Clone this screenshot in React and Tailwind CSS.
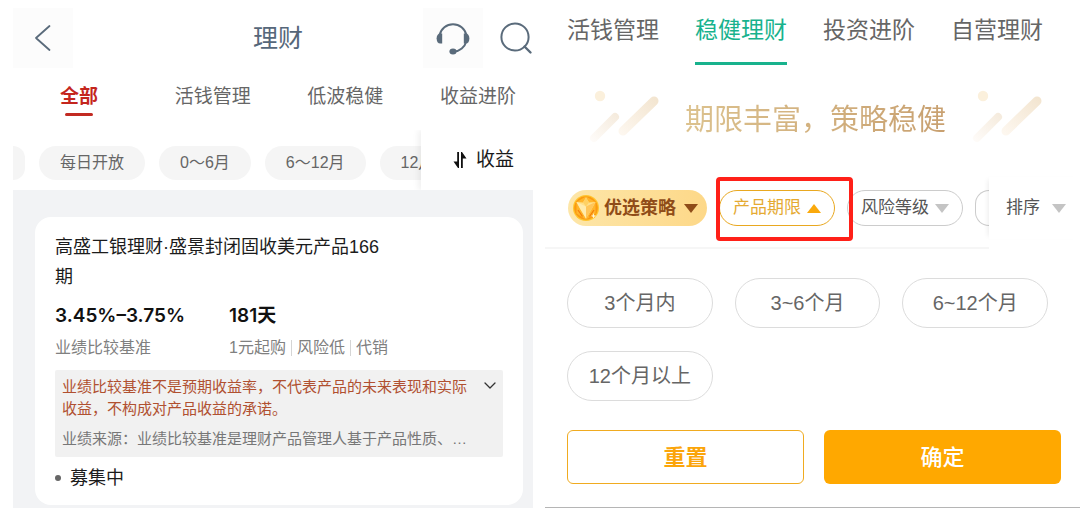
import React from "react";

const sans = "font-['Liberation_Sans','Noto_Sans_CJK_SC',sans-serif]";

function BackIcon() {
  return (
    <svg className="size-[30px]" viewBox="0 0 30 30" fill="none" stroke="#5a6b7b" strokeWidth="1.8" strokeLinecap="round" strokeLinejoin="round" aria-hidden="true">
      <path d="M21.500 3L8 15L21.500 27" />
    </svg>
  );
}

function HeadsetIcon() {
  return (
    <svg className="size-[34px]" viewBox="0 0 34 34" fill="none" aria-hidden="true">
      <path d="M3.600 14A13.700 13.700 0 0 1 30.400 14" stroke="#5a6b7b" strokeWidth="2" />
      <path d="M30.300 20.500A13.700 13.700 0 0 1 18 30.600" stroke="#5a6b7b" strokeWidth="2" />
      <path d="M6.200 12.500H4.200C2 12.500 .6 14.500 .6 17.500S2 22.500 4.200 22.500H6.200Z" fill="#5a6b7b" />
      <path d="M27.800 12.500H29.800C32 12.500 33.400 14.500 33.400 17.500S32 22.500 29.800 22.500H27.800Z" fill="#5a6b7b" />
      <ellipse cx="17" cy="30.500" rx="3.600" ry="3" fill="#5a6b7b" />
    </svg>
  );
}

function SearchIcon() {
  return (
    <svg className="size-[34px]" viewBox="0 0 34 34" fill="none" stroke="#5a6b7b" strokeWidth="2" strokeLinecap="round" aria-hidden="true">
      <circle cx="16" cy="16" r="13.600" />
      <path d="M25.500 25.500L31.500 31.500" strokeWidth="2.400" />
    </svg>
  );
}

function SortIcon() {
  return (
    <svg className="h-[18px] w-[14px]" viewBox="0 0 14 18" aria-hidden="true">
      <path d="M4.200 1H6V17H5L.5 10.500H4.200Z" fill="#111" />
      <path d="M8 1H9L13.500 7.500H9.800V17H8Z" fill="#111" />
    </svg>
  );
}

function Triangle({ up = false, className }) {
  return (
    <svg className={className} viewBox="0 0 14 9" fill="currentColor" aria-hidden="true">
      <path d={up ? "M7 0L14 9H0Z" : "M0 0H14L7 9Z"} />
    </svg>
  );
}

function CoinIcon() {
  return (
    <svg className="size-[26px]" viewBox="0 0 26 26" aria-hidden="true">
      <circle cx="13" cy="13" r="13" fill="#ffc52e" />
      <circle cx="13" cy="13" r="11.800" fill="#fb9a12" />
      <path d="M13 1.500L22.500 7V18.500L13 24.500L3.500 18.500V7Z" fill="#ffb52b" />
      <path d="M3.500 7L10 7.500L13 2.500L16 7.500L22.500 7L19 13.500L13 23.500L7 13.500Z" fill="#ffe08a" />
      <path d="M13 11.500L22.500 7L19 13.500L13 23.500Z" fill="#ffc65a" />
      <path d="M3.500 7L13 11.500V23.500L7 13.500Z" fill="#ffebac" />
      <path d="M10 7.500L13 2.500L16 7.500L13 11.500Z" fill="#ffd163" />
      <path d="M5 15L9.500 21.500M21 15L16.500 21.500" stroke="#f47d0b" strokeWidth="1.300" />
      <path d="M20.500 18L21.200 20.200L23 21L21.200 21.700L20.500 23.500L19.800 21.700L18 21L19.800 20.200Z" fill="#fff6d8" />
    </svg>
  );
}

function Sparks({ id }) {
  return (
    <svg className="h-[56px] w-[72px]" viewBox="0 0 72 56" fill="none" strokeLinecap="round" aria-hidden="true">
      <defs>
        <linearGradient id={id} gradientUnits="userSpaceOnUse" x1="68" y1="10" x2="34" y2="46">
          <stop stopColor="#f3e5d0" />
          <stop offset="1" stopColor="#fdf7ef" />
        </linearGradient>
        <linearGradient id={id + "-short"} gradientUnits="userSpaceOnUse" x1="29" y1="26" x2="4" y2="52">
          <stop stopColor="#f5ebdd" />
          <stop offset="1" stopColor="#fefbf8" />
        </linearGradient>
      </defs>
      <circle cx="12" cy="8" r="5.200" fill="#fbf0dc" />
      <path d="M66 13L35 43" stroke={`url(#${id})`} strokeWidth="9" />
      <path d="M27 29L6 50" stroke={`url(#${id}-short)`} strokeWidth="8" />
    </svg>
  );
}

function WealthPanel() {
  const chip = "h-[34px] shrink-0 rounded-full bg-[#f5f5f5] px-[21px] text-base text-[#666] whitespace-nowrap";
  return (
    <section className="flex min-w-0 flex-col">
      <header className="flex items-center pt-2">
        <button aria-label="返回" className="flex size-[60px] items-center justify-center bg-[#fcfcfc]">
          <BackIcon />
        </button>
        <h1 className="flex-1 pl-[60px] text-center text-[25px] leading-[60px] text-[#56677a]">理财</h1>
        <div className="flex items-center gap-4">
          <button aria-label="客服" className="flex size-[60px] items-center justify-center bg-[#fcfcfc]">
            <HeadsetIcon />
          </button>
          <button aria-label="搜索">
            <SearchIcon />
          </button>
        </div>
      </header>

      <nav className="flex justify-between pt-[15px] pr-[17px] pl-[47px] text-[19px] leading-7 text-[#666]">
        <a href="#all" aria-current="page" className="flex flex-col items-center font-bold text-[#c4261d]">
          全部
          <span className="mt-[2px] h-[3px] w-7 rounded-full bg-[#c22a22]" />
        </a>
        <a href="#cash" className="pl-[38px]">活钱管理</a>
        <a href="#low" className="pl-[18px]">低波稳健</a>
        <a href="#growth" className="pl-[18px]">收益进阶</a>
      </nav>

      <div className="relative mt-[14px] flex h-[60px] items-center gap-[14px] overflow-hidden pt-[6px]">
        <span className="h-[34px] w-3 shrink-0 rounded-r-full bg-[#f5f5f5]" />
        <button className={chip}>每日开放</button>
        <button className={chip}>0～6月</button>
        <button className={chip}>6～12月</button>
        <button className={chip}>12月以上</button>
        <button className="absolute inset-y-0 right-0 flex w-[112px] items-center gap-[9px] bg-white pl-8 text-[19px] text-[#1a1a1a] shadow-[-3px_0_6px_rgba(0,0,0,0.06)]">
          <SortIcon />
          收益
        </button>
      </div>

      <div className="flex-1 bg-[#f2f3f5] pt-[27px] pr-[10px] pl-[22px]">
        <article className="rounded-2xl bg-white px-5 pt-[15px] pb-3">
          <h2 className="w-3/4 text-lg leading-[30px] text-[#1c1c1c]">高盛工银理财·盛景封闭固收美元产品166期</h2>
          <div className="grid grid-cols-[174px_1fr] pt-2">
            <strong className="font-['Inter','Noto_Sans_CJK_SC',sans-serif] text-[19px] leading-8 font-semibold text-[#111]">3.45%–3.75%</strong>
            <strong className="font-['Inter','Noto_Sans_CJK_SC',sans-serif] text-[19px] leading-8 font-semibold text-[#111]">181天</strong>
            <span className="text-base leading-8 text-[#808080]">业绩比较基准</span>
            <span className="flex items-center text-base leading-8 text-[#808080]">
              1元起购
              <i className="mx-[5px] h-4 w-px bg-[#d5d5d5]" />
              风险低
              <i className="mx-[5px] h-4 w-px bg-[#d5d5d5]" />
              代销
            </span>
          </div>
          <div className="mt-[6px] flex justify-between rounded-xs bg-[#f1f1f1] px-[7px] pt-[6px] pb-[7px] text-[15px]">
            <div className="min-w-0">
              <p className="max-w-[408px] leading-[22px] text-[#b05030]">业绩比较基准不是预期收益率，不代表产品的未来表现和实际收益，不构成对产品收益的承诺。</p>
              <p className="max-w-[408px] truncate pt-2 leading-[22px] text-[#777]">业绩来源：业绩比较基准是理财产品管理人基于产品性质、…</p>
            </div>
            <button aria-label="展开" className="h-5 shrink-0">
              <svg className="h-2 w-[12px]" viewBox="0 0 12 8" fill="none" stroke="#333" strokeWidth="1.300" strokeLinecap="round" strokeLinejoin="round" aria-hidden="true">
                <path d="M1 1L6 6L11 1" />
              </svg>
            </button>
          </div>
          <p className="flex items-center gap-[9px] pt-[6px] text-lg leading-[30px] text-[#1c1c1c]">
            <span className="size-[6px] rounded-full bg-[#666]" />
            募集中
          </p>
        </article>
      </div>
    </section>
  );
}

function FilterPanel() {
  const options = ["3个月内", "3~6个月", "6~12个月", "12个月以上"];
  return (
    <section className="flex min-w-0 flex-col border-b border-[#b5b5b5]">
      <nav className="flex gap-9 pt-3 pl-[22px] text-[23px] leading-9 whitespace-nowrap text-[#666]">
        <a href="#cash-management">活钱管理</a>
        <a href="#steady" aria-current="page" className="border-b-[3px] border-[#18b28d] pb-[14px] text-[#18b28d]">稳健理财</a>
        <a href="#invest">投资进阶</a>
        <a href="#own">自营理财</a>
      </nav>

      <div className="flex items-start justify-between pt-[23px] pr-[37px] pl-[43px]">
        <Sparks id="spark-left" />
        <h2 className="bg-linear-to-r from-[#dcc28e] to-[#c8a070] bg-clip-text pt-2 text-[29px] leading-[48px] whitespace-nowrap text-transparent">期限丰富，策略稳健</h2>
        <Sparks id="spark-right" />
      </div>

      <div className="relative mt-[33px] flex h-[72px] items-center">
        <div className="flex h-full min-w-0 flex-1 items-start gap-3 border-b-2 border-[#f6f6f6] pt-[13px] pl-[23px] whitespace-nowrap">
          <button className="flex h-9 shrink-0 items-center rounded-full bg-linear-to-r from-[#fde6a8] to-[#fdd888] pr-[9px] pl-[5px] text-lg font-bold text-[#8f4c18]">
            <CoinIcon />
            <span className="pr-2 pl-[5px]">优选策略</span>
            <Triangle className="h-[9px] w-[14px]" />
          </button>
          <div className="relative shrink-0">
            <button aria-expanded="true" className="flex h-9 items-center gap-[6px] rounded-full border border-[#e9a820] px-[13px] text-[17px] text-[#e5aa32]">
              产品期限
              <Triangle up className="h-[9px] w-[14px] text-[#faa90c]" />
            </button>
            <span className="pointer-events-none absolute -top-[13px] -right-[18px] -bottom-[15px] -left-[3px] z-10 rounded-sm border-4 border-[#ff2018]" />
          </div>
          <button className="flex h-9 shrink-0 items-center gap-[6px] rounded-full border border-[#cccccc] px-[13px] text-[17px] text-[#555]">
            风险等级
            <Triangle className="h-[9px] w-[14px] text-[#c4c4c4]" />
          </button>
          <span className="h-9 min-w-0 flex-1 rounded-l-full border border-r-0 border-[#cccccc]" />
        </div>
        <button className="flex h-[62px] w-[91px] shrink-0 items-center gap-[12px] self-start bg-white pl-[17px] text-[17px] text-[#555] shadow-[-4px_0_5px_-3px_rgba(0,0,0,0.08)]">
          排序
          <Triangle className="h-[9px] w-[14px] text-[#c4c4c4]" />
        </button>
      </div>

      <div className="grid grid-cols-3 gap-x-[22px] gap-y-[23px] pt-[29px] pr-8 pl-[22px]">
        {options.map((label) => (
          <button key={label} className="h-[50px] rounded-full border border-[#dcdcdc] text-xl text-[#666]">
            {label}
          </button>
        ))}
      </div>

      <div className="grid grid-cols-2 gap-5 pt-[29px] pr-[19px] pb-[22px] pl-[22px] text-[22px] font-bold">
        <button className="h-[54px] rounded-md border border-[#f0ab20] text-[#fba50a]">重置</button>
        <button className="h-[54px] rounded-md bg-[#ffa800] font-medium text-white">确定</button>
      </div>
    </section>
  );
}

export default function App() {
  return (
    <main className={`grid min-h-screen grid-cols-[520fr_535fr] gap-3 bg-white pl-[13px] ${sans}`}>
      <WealthPanel />
      <FilterPanel />
    </main>
  );
}
